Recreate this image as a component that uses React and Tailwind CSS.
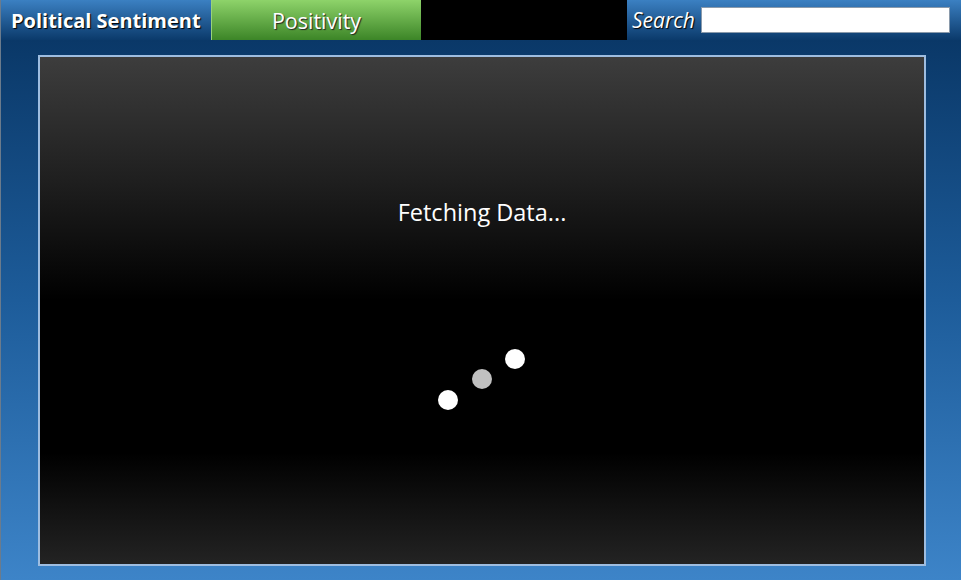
import React from 'react';

const App = () => {

  return (

    <div
      className="w-[961px] h-[580px] flex flex-col border-l border-[#6b7b8c] bg-[linear-gradient(to_bottom,#0a3868_40px,#1d5c9a_300px,#3d84c8_580px)]"
      style={{ fontFamily: '"Open Sans", Lato, sans-serif' }}
    >

      <div className="h-[40px] flex items-stretch bg-[linear-gradient(to_bottom,#3b80c2,#0b3a6b)]">

        <div className="w-[210px] flex items-center pt-[2px] pl-[10px] text-white font-bold text-[20px] [text-shadow:1px_1px_1px_#000]">
          Political Sentiment
        </div>

        <div className="w-[210px] flex items-center justify-center pt-[2px] text-white text-[21.5px] border-l border-[#9ad27a] bg-[linear-gradient(to_bottom,#8ed36a,#3c8527)] [text-shadow:1px_1px_1px_#222]">
          Positivity
        </div>

        <div className="w-[206px] bg-black" />

        <div className="flex-1 flex items-center">

          <span className="ml-[5px] pt-[2px] text-white italic text-[21px] [text-shadow:1px_1px_1px_#000]">
            Search
          </span>

          <input
            type="text"
            className="ml-[6px] w-[249px] h-[26px] bg-white border border-[#8a9aab] outline-none"
          />

        </div>

      </div>

      <div className="pt-[15px] pl-[37px]">

        <div className="w-[888px] h-[511px] border-2 border-[#9ebde0] flex flex-col items-center bg-[linear-gradient(to_bottom,#3d3d3d_0%,#1e1e1e_25%,#000_48%,#000_78%,#232323_100%)]">

          <p className="mt-[140px] text-white text-[23.5px] leading-[30px]">
            Fetching Data...
          </p>

          <svg
            width="100"
            height="70"
            viewBox="0 0 100 70"
            className="mt-[118px]"
          >
            <circle cx="16" cy="55" r="10" fill="#fff" />
            <circle cx="50" cy="34" r="10" fill="#c0c0c0" />
            <circle cx="83" cy="14" r="10" fill="#fff" />
          </svg>

        </div>

      </div>

    </div>

  );

};

export default App;
